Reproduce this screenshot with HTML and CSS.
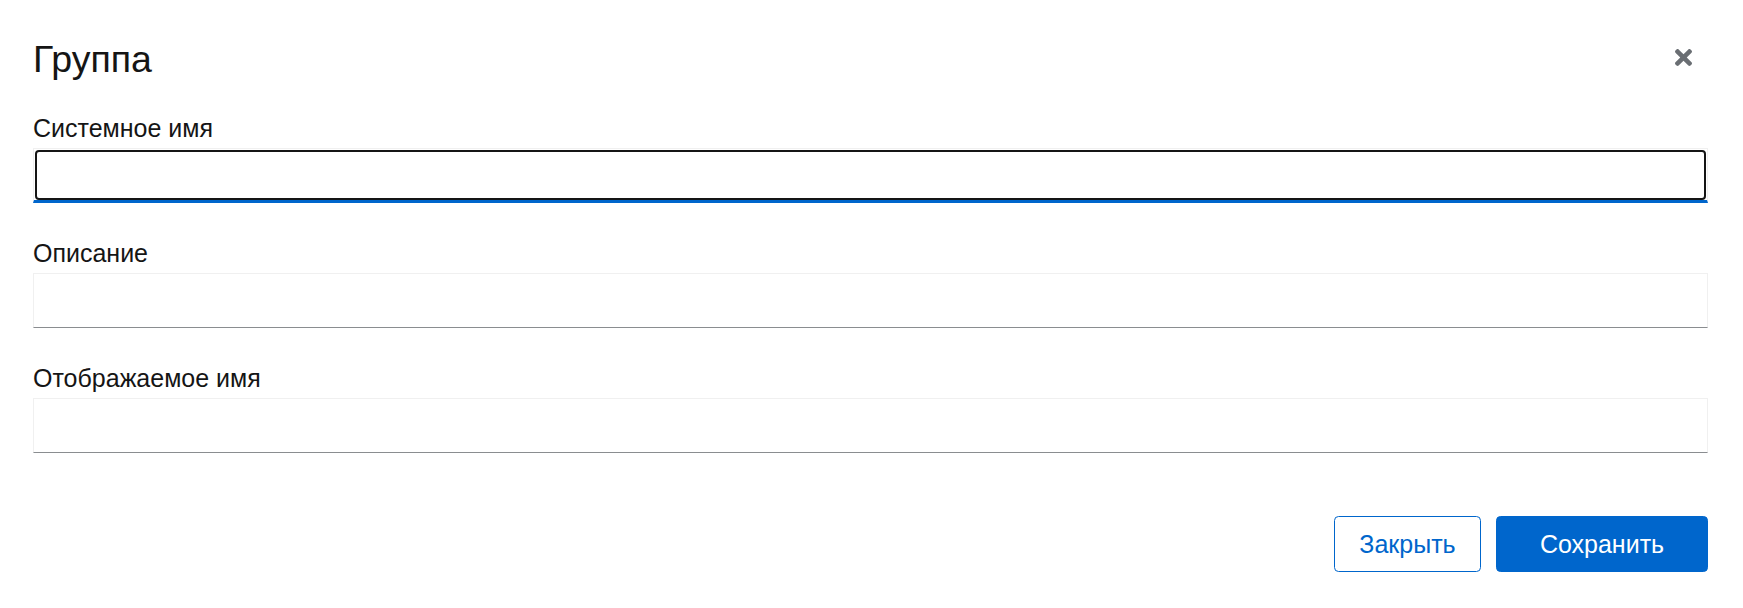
FILE: index.html
```html
<!DOCTYPE html>
<html lang="ru">
<head>
<meta charset="utf-8">
<title>Группа</title>
<link rel="stylesheet" href="styles.css">
</head>
<body>
<div class="modal">
  <header class="modal-header">
    <h1 class="modal-title">Группа</h1>
    <button class="close-btn" type="button" aria-label="Close">
      <svg width="17" height="17" viewBox="0 80 352 352" aria-hidden="true"><path fill="currentColor" d="M242.72 256l100.07-100.07c12.28-12.28 12.28-32.19 0-44.48l-22.24-22.240c-12.28-12.28-32.19-12.28-44.48 0L176 189.28 75.93 89.21c-12.28-12.28-32.19-12.28-44.48 0L9.21 111.45c-12.28 12.28-12.28 32.19 0 44.48L109.28 256 9.21 356.07c-12.28 12.28-12.28 32.19 0 44.48l22.24 22.24c12.28 12.28 32.2 12.28 44.48 0L176 322.72l100.07 100.07c12.28 12.28 32.2 12.28 44.48 0l22.24-22.24c12.28-12.28 12.28-32.19 0-44.48L242.72 256z"/></svg>
    </button>
  </header>
  <form class="form">
    <div class="field">
      <label class="label" for="sysname">Системное имя</label>
      <div class="control focused">
        <input class="input-inner" id="sysname" type="text">
      </div>
    </div>
    <div class="field">
      <label class="label" for="desc">Описание</label>
      <div class="control">
        <input class="input-inner" id="desc" type="text">
      </div>
    </div>
    <div class="field">
      <label class="label" for="dispname">Отображаемое имя</label>
      <div class="control">
        <input class="input-inner" id="dispname" type="text">
      </div>
    </div>
  </form>
  <footer class="modal-footer">
    <button class="btn btn-secondary" type="button">Закрыть</button>
    <button class="btn btn-primary" type="button">Сохранить</button>
  </footer>
</div>
</body>
</html>
```
FILE: styles.css
```css
html, body {
  margin: 0;
  padding: 0;
  background: #ffffff;
}

body {
  font-family: "Liberation Sans", Arial, sans-serif;
  color: #151515;
}

.modal {
  box-sizing: border-box;
  width: 1743px;
  height: 608px;
  padding: 36px 35px 36px 33px;
  display: flex;
  flex-direction: column;
}

.modal-header {
  display: flex;
  align-items: center;
  justify-content: space-between;
}

.modal-title {
  margin: 0;
  font-size: 37.5px;
  font-weight: 400;
  line-height: 46px;
}

.close-btn {
  border: 0;
  background: transparent;
  color: #6a6e73;
  padding: 0 16px 0 0;
  margin-bottom: 3px;
  display: flex;
  align-items: center;
  cursor: pointer;
}

.form {
  margin-top: 32px;
  display: flex;
  flex-direction: column;
  gap: 36.2px;
}

.field {
  display: flex;
  flex-direction: column;
  gap: 5px;
}

.label {
  font-size: 25px;
  line-height: 29px;
}

.control {
  box-sizing: border-box;
  height: 55px;
  border: 1px solid #f0f0f0;
  border-bottom: 1px solid #8a8d90;
  background: #fff;
  display: flex;
}

.control.focused {
  border-bottom: 3px solid #0066cc;
  padding: 1px 1px 0 1px;
}

.input-inner {
  flex: 1;
  min-width: 0;
  border: 0;
  margin: 0;
  padding: 0 12px;
  background: transparent;
  font-family: inherit;
  font-size: 25px;
  outline: none;
}

.control.focused .input-inner {
  border: 2px solid #151515;
  border-radius: 4px;
  padding: 0 10px;
}

.modal-footer {
  margin-top: auto;
  display: flex;
  justify-content: flex-end;
  gap: 15px;
}

.btn {
  box-sizing: border-box;
  height: 56px;
  border-radius: 4.5px;
  font-family: inherit;
  font-size: 25px;
  line-height: 36px;
  text-align: center;
  padding: 0;
  cursor: pointer;
}

.btn-secondary {
  width: 147px;
  background: #fff;
  color: #0066cc;
  border: 1px solid #0066cc;
}

.btn-primary {
  width: 212px;
  background: #0066cc;
  color: #fff;
  border: 1px solid #0066cc;
}
```
